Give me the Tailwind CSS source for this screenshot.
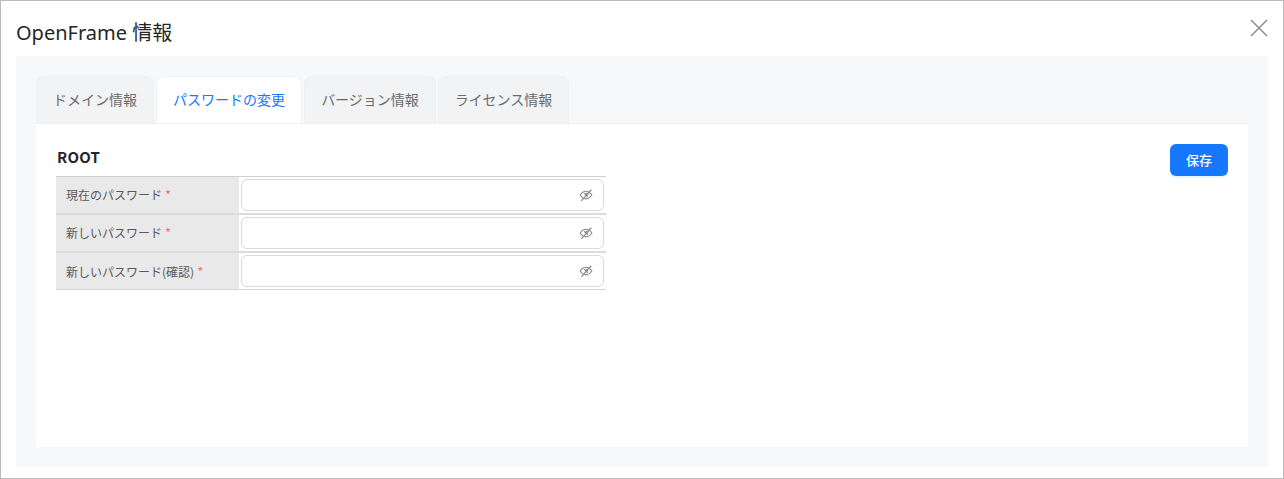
<!DOCTYPE html>
<html lang="ja">
<head>
<meta charset="utf-8" />
<title>OpenFrame 情報</title>
<script src="https://cdn.jsdelivr.net/npm/@tailwindcss/browser@4"></script>
</head>
<body class="bg-white font-['Noto_Sans_CJK_JP','Noto_Sans',sans-serif]">
<div class="w-[1284px] h-[479px] border border-[#bbbbbb] flex flex-col overflow-hidden">
  <!-- header -->
  <div class="h-[55px] pl-[15px] pr-[15px] flex items-start justify-between shrink-0">
    <h1 class="font-['Noto_Sans','Noto_Sans_CJK_JP',sans-serif] text-[20px] leading-[28px] mt-[18px] text-[#262626]">OpenFrame 情報</h1>
    <button class="mt-[18px] text-[#8c8c8c]">
      <svg class="w-[18px] h-[18px]" viewBox="0 0 18 18" fill="none" stroke="currentColor" stroke-width="1.5"><path d="M1 1l16 16M17 1L1 17"/></svg>
    </button>
  </div>

  <div class="mx-[15px] mb-[11px] h-[411px] bg-[#f7f8fa] px-[20px] pt-[20px] pb-[20px] flex flex-col">
    <!-- tabs -->
    <div class="flex gap-[2px] h-[47px] shrink-0 text-[14px] leading-[22px] text-[#6b6b6b]">
      <div class="w-[118px] pb-[2px] bg-[#f2f3f5] border border-b-0 border-[#f0f0f0] rounded-t-[8px] flex items-center justify-center">ドメイン情報</div>
      <div class="w-[146px] pb-[2px] bg-white border border-b-0 border-[#f0f0f0] rounded-t-[8px] flex items-center justify-center text-[#1677ff]">パスワードの変更</div>
      <div class="w-[132px] pb-[2px] bg-[#f2f3f5] border border-b-0 border-[#f0f0f0] rounded-t-[8px] flex items-center justify-center">バージョン情報</div>
      <div class="w-[131px] pb-[2px] bg-[#f2f3f5] border border-b-0 border-[#f0f0f0] rounded-t-[8px] flex items-center justify-center">ライセンス情報</div>
    </div>

    <!-- tab content -->
    <div class="flex-1 bg-white border-t border-[#f0f0f0] pl-[20px] pr-[20px] pt-[20px] flex justify-between items-start">
      <div class="w-[550px]">
        <h2 class="text-[15px] leading-[24px] mt-[1px] pl-[1px] mb-[7px] font-bold tracking-[0.2px] text-[#262626]">ROOT</h2>
        <div class="border-t border-[#d0d0d0]">
          <div class="flex h-[38px] border-b-2 border-[#dcdcdc]">
            <div class="w-[183px] bg-[#e9e9e9] pl-[10px] flex items-center text-[12px] text-[#595959]">現在のパスワード<span class="text-[#ff6b6d] text-[13px] leading-[12px] ml-[3px]">*</span></div>
            <div class="flex-1 pl-[2px] pr-[2px] pt-[2px]">
              <div class="h-[32px] border border-[#d9d9d9] rounded-[6px] flex items-center justify-end pr-[10px] text-[#8c8c8c]">
                <svg class="w-[14px] h-[14px]" viewBox="0 0 24 24" fill="none" stroke="currentColor" stroke-width="2"><path d="M2 12c2.500-4 6-6.500 10-6.500s7.500 2.500 10 6.500c-2.500 4-6 6.500-10 6.500s-7.500-2.500-10-6.500z"/><path d="M9 9l6 6M12 8.500l3.500 3.500"/><path d="M4 22L21 3" stroke-width="2.200"/></svg>
              </div>
            </div>
          </div>
          <div class="flex h-[38px] border-b-2 border-[#dcdcdc]">
            <div class="w-[183px] bg-[#e9e9e9] pl-[10px] flex items-center text-[12px] text-[#595959]">新しいパスワード<span class="text-[#ff6b6d] text-[13px] leading-[12px] ml-[3px]">*</span></div>
            <div class="flex-1 pl-[2px] pr-[2px] pt-[2px]">
              <div class="h-[32px] border border-[#d9d9d9] rounded-[6px] flex items-center justify-end pr-[10px] text-[#8c8c8c]">
                <svg class="w-[14px] h-[14px]" viewBox="0 0 24 24" fill="none" stroke="currentColor" stroke-width="2"><path d="M2 12c2.500-4 6-6.500 10-6.500s7.500 2.500 10 6.500c-2.500 4-6 6.500-10 6.500s-7.500-2.500-10-6.500z"/><path d="M9 9l6 6M12 8.500l3.500 3.500"/><path d="M4 22L21 3" stroke-width="2.200"/></svg>
              </div>
            </div>
          </div>
          <div class="flex h-[37px] border-b border-[#d4d4d4]">
            <div class="w-[183px] bg-[#e9e9e9] pl-[10px] pt-[1px] flex items-center text-[12px] text-[#595959]">新しいパスワード(確認)<span class="text-[#ff6b6d] text-[13px] leading-[12px] ml-[3px]">*</span></div>
            <div class="flex-1 pl-[2px] pr-[2px] pt-[2px]">
              <div class="h-[32px] border border-[#d9d9d9] rounded-[6px] flex items-center justify-end pr-[10px] text-[#8c8c8c]">
                <svg class="w-[14px] h-[14px]" viewBox="0 0 24 24" fill="none" stroke="currentColor" stroke-width="2"><path d="M2 12c2.500-4 6-6.500 10-6.500s7.500 2.500 10 6.500c-2.500 4-6 6.500-10 6.500s-7.500-2.500-10-6.500z"/><path d="M9 9l6 6M12 8.500l3.500 3.500"/><path d="M4 22L21 3" stroke-width="2.200"/></svg>
              </div>
            </div>
          </div>
        </div>
      </div>
      <button class="w-[58px] h-[32px] bg-[#1677ff] text-white text-[13px] font-medium rounded-[6px] shadow-[0_2px_0_rgba(5,145,255,0.1)]">保存</button>
    </div>
  </div>
</div>
</body>
</html>
